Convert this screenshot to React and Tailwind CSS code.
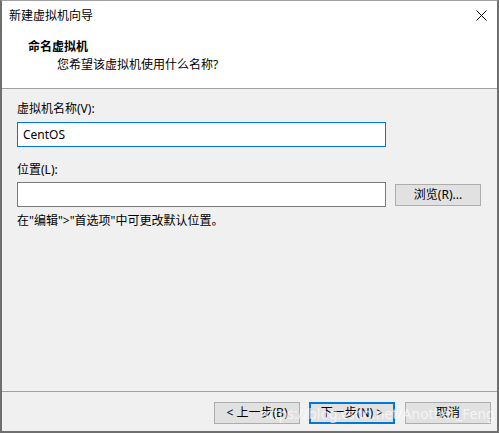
import * as React from 'react';

const font = { fontFamily: '"Noto Sans", "Noto Sans CJK SC", sans-serif' };

function WinButton({ children, primary = false, className = '' }) {
  return (
    <button
      type="button"
      className={`flex h-[22px] w-[86px] items-center justify-center bg-[#e1e1e1] text-[12px] leading-none text-black ${
        primary ? 'border-2 border-[#0078d7]' : 'border border-[#adadad]'
      } ${className}`}
    >
      {children}
    </button>
  );
}

export default function App() {
  return (
    <div className="h-[433px] w-[499px] overflow-hidden bg-white" style={font}>
      <div className="relative flex h-[433px] w-[499px] flex-col border-b-2 border-l-2 border-r-2 border-[#6f6f6f] border-t border-t-[#a0a0a0]">
        {/* title bar + header */}
        <div className="flex h-[87px] flex-col bg-white">
          <div className="flex h-[29px] items-center justify-between pl-[7px] pr-[9px]">
            <span className="text-[12px] text-black">新建虚拟机向导</span>
            <svg width="11" height="11" viewBox="0 0 11 11" className="mr-[1px]">
              <path d="M0.5 0.5 L10.5 10.5 M10.5 0.5 L0.5 10.5" stroke="#000" strokeWidth="1" fill="none" />
            </svg>
          </div>
          <div className="pl-[26px] pt-[8px] text-[12px] font-bold leading-[18px] text-black">命名虚拟机</div>
          <div className="pl-[55px] text-[12px] leading-[18px] text-black">您希望该虚拟机使用什么名称?</div>
        </div>
        <div className="h-px bg-[#a0a0a0]" />

        {/* body */}
        <div className="flex flex-1 flex-col bg-[#f0f0f0] pl-[15px] pt-[11px]">
          <div className="text-[12px] leading-[18px] text-black">虚拟机名称(V):</div>
          <div className="mt-[4px] flex h-[25px] w-[369px] items-center border border-[#0078d7] bg-white pl-[5px] text-[12px] text-black">
            CentOS
          </div>
          <div className="mt-[14px] text-[12px] leading-[18px] text-black">位置(L):</div>
          <div className="mt-[3px] flex items-center gap-[9px]">
            <div className="h-[25px] w-[369px] border border-[#7a7a7a] bg-white" />
            <WinButton>浏览(R)...</WinButton>
          </div>
          <div className="mt-[5px] text-[12px] leading-[18px] text-black">在"编辑"&gt;"首选项"中可更改默认位置。</div>
        </div>

        <div className="h-px bg-[#a0a0a0]" />
        <div className="flex h-[39px] items-start bg-[#f0f0f0] pl-[212px] pt-[10px]">
          <WinButton>&lt; 上一步(B)</WinButton>
          <WinButton primary className="ml-[9px]">下一步(N) &gt;</WinButton>
          <WinButton className="ml-[10px]">取消</WinButton>
        </div>

        {/* watermark */}
        <div className="pointer-events-none absolute left-[258px] top-[403px] text-[14px] leading-[20px] text-white/70">
          https://blog.csdn.net/Another_Feng
        </div>
      </div>
    </div>
  );
}
